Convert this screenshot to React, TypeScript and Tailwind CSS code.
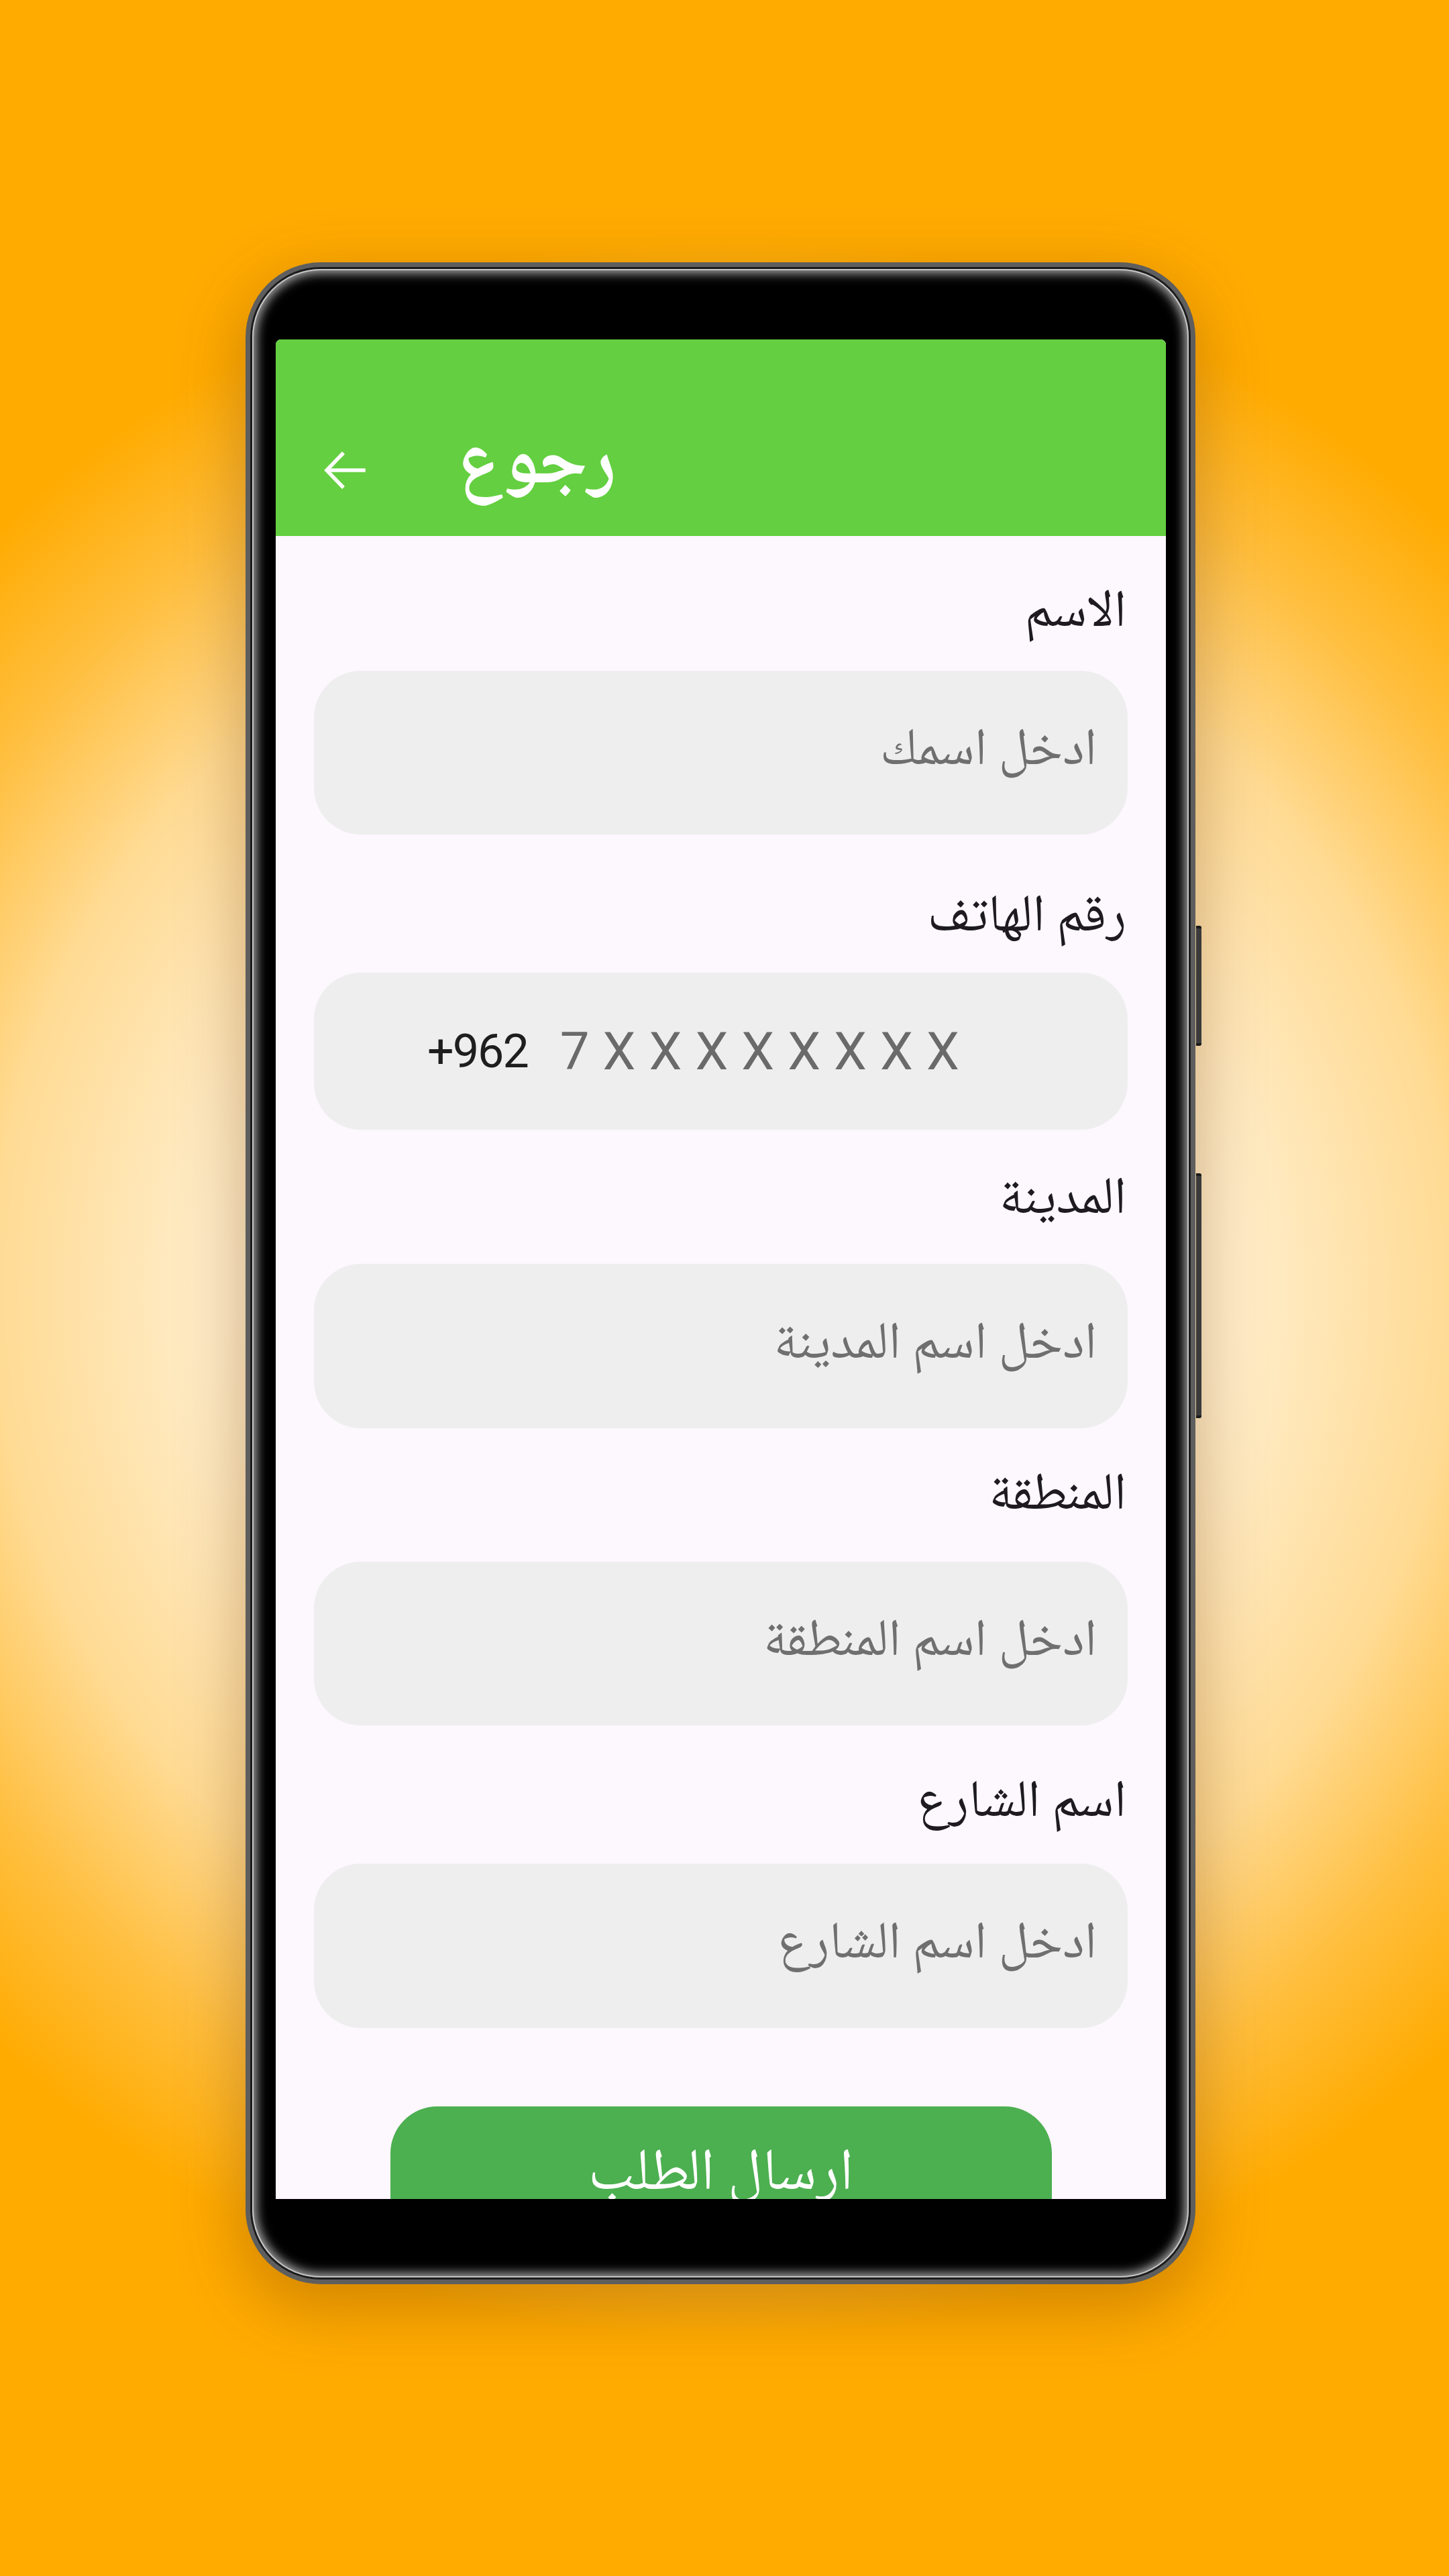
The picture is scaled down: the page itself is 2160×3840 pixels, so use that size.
import React from "react";

const arabic = "font-['Noto_Naskh_Arabic','Noto_Sans_Arabic','DejaVu_Sans',sans-serif]";

function Label({ text, mt }: { text: string; mt: string }) {
  return (
    <div className={`${mt} h-[100px] flex items-center justify-start pr-[2px] text-[78px] leading-none text-[#1d1b20] ${arabic}`}>
      {text}
    </div>
  );
}

function Field({ placeholder, mt, h }: { placeholder: string; mt: string; h: string }) {
  return (
    <div className={`${mt} ${h} rounded-[70px] bg-[#eeeeee] flex items-center pr-[46px] text-[78px] leading-none text-[#6f6f6f] ${arabic}`}>
      {placeholder}
    </div>
  );
}

export default function App() {
  return (
    <div className="w-[2160px] h-[3840px] overflow-hidden bg-[radial-gradient(ellipse_1600px_1600px_at_50%_50%,#fff5e3_0%,#ffefd0_45%,#ffdb94_68%,#ffbe3c_84%,#ffab00_98%)] pt-[391px] pl-[366px]">
      <div className="relative w-[1416px] h-[3014px]">
        {/* side buttons */}
        <div className="absolute left-[1417px] top-[989px] w-[8px] h-[179px] rounded-r-[3px] bg-[#3a3a3a] border-y-[4px] border-[#1a1a1a]" />
        <div className="absolute left-[1417px] top-[1358px] w-[8px] h-[365px] rounded-r-[3px] bg-[#3a3a3a] border-y-[4px] border-[#1a1a1a]" />
        <div className="w-full h-full rounded-[112px] bg-[#5e5e5e] p-[7px] shadow-[0_30px_90px_10px_rgba(130,70,0,0.35)]">
          <div className="w-full h-full rounded-[105px] bg-[#1c1c1c] p-[3px]">
            <div className="w-full h-full rounded-[102px] bg-black shadow-[inset_0_0_0_2px_#c4c4c4,inset_0_0_16px_6px_rgba(205,205,205,0.85)] pt-[105px] pb-[117px] pl-[35px] pr-[34px] flex">
              {/* screen */}
              <div className="flex-1 flex flex-col bg-[#fdf7fe] rounded-t-[8px] overflow-hidden">
                {/* header */}
                <div className="h-[293px] shrink-0 bg-[#64cf40] flex items-end">
                  <div className="h-[196px] w-full flex items-center pl-[72px]">
                    <svg width="62" height="60" viewBox="0 0 62 60" fill="none" stroke="white" strokeWidth="5.5" strokeLinecap="square">
                      <path d="M59 30H6" />
                      <path d="M29 4L4 30L29 56" strokeLinecap="butt" strokeLinejoin="miter" />
                    </svg>
                    <div className={`ml-[136px] text-white text-[112px] font-bold leading-none pb-[10px] ${arabic}`} dir="rtl">
                      رجوع
                    </div>
                  </div>
                </div>
                {/* form */}
                <div dir="rtl" className="flex flex-col px-[57px]">
                  <Label text="الاسم" mt="mt-[67px]" />
                  <Field placeholder="ادخل اسمك" mt="mt-[34px]" h="h-[244px]" />
                  <Label text="رقم الهاتف" mt="mt-[76px]" />
                  <div dir="ltr" className="mt-[30px] h-[234px] rounded-[70px] bg-[#eeeeee] flex items-center pl-[169px] font-['Roboto','Liberation_Sans',sans-serif]">
                    <span className="text-[70px] text-[#1e1e1e] tracking-[-2px]">+962</span>
                    <span className="ml-[48px] text-[78px] text-[#6a6a6a] tracking-[20px]">7XXXXXXXX</span>
                  </div>
                  <Label text="المدينة" mt="mt-[57px]" />
                  <Field placeholder="ادخل اسم المدينة" mt="mt-[43px]" h="h-[245px]" />
                  <Label text="المنطقة" mt="mt-[53px]" />
                  <Field placeholder="ادخل اسم المنطقة" mt="mt-[46px]" h="h-[244px]" />
                  <Label text="اسم الشارع" mt="mt-[68px]" />
                  <Field placeholder="ادخل اسم الشارع" mt="mt-[38px]" h="h-[245px]" />
                  <div className="mt-[117px] flex justify-center">
                    <div className={`w-[986px] h-[220px] rounded-[70px] bg-[#4caf50] flex justify-center pt-[52px] text-white text-[88px] leading-[1.2] ${arabic}`}>
                      ارسال الطلب
                    </div>
                  </div>
                </div>
              </div>
            </div>
          </div>
        </div>
      </div>
    </div>
  );
}
